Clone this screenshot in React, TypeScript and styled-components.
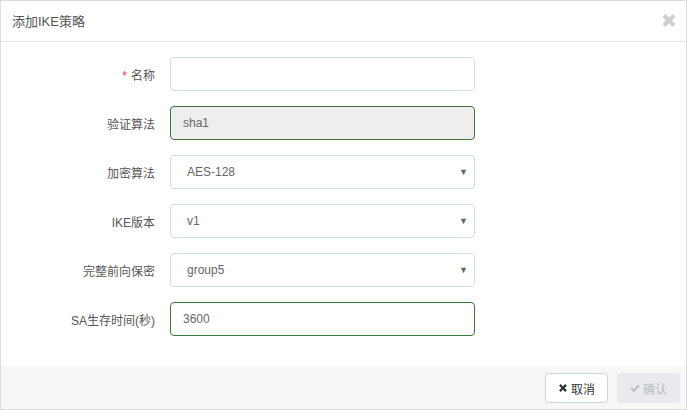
import React from "react";
import styled, { createGlobalStyle } from "styled-components";

const Global = createGlobalStyle`
  html, body { margin: 0; padding: 0; background: #fff; }
  body { font-family: "Liberation Sans", "Noto Sans CJK SC", Arial, sans-serif; }
  * { box-sizing: border-box; }
`;

const Modal = styled.div`
  width: 687px;
  height: 410px;
  border: 1px solid #dcdcdc;
  display: flex;
  flex-direction: column;
  background: #fff;
`;

const Header = styled.div`
  height: 41px;
  border-bottom: 1px solid #e5e5e5;
  display: flex;
  align-items: center;
  justify-content: space-between;
  padding: 0 9px 1px 11px;
`;

const Title = styled.div`
  font-size: 13px;
  color: #555;
`;

const Close = styled.button`
  border: none;
  background: none;
  padding: 0;
  width: 16px;
  height: 16px;
  display: flex;
  align-items: center;
  justify-content: center;
  cursor: pointer;
`;

const Body = styled.div`
  flex: 1;
  padding: 15px 0 30px;
  display: flex;
  flex-direction: column;
  gap: 15px;
`;

const Row = styled.div`
  display: grid;
  grid-template-columns: 154px 305px;
  column-gap: 15px;
  align-items: center;
  height: 34px;
`;

const Label = styled.label`
  text-align: right;
  font-size: 12px;
  color: #555;
`;

const Req = styled.span`
  color: #e4393c;
  margin-right: 4px;
`;

const Field = styled.div<{ $state?: "ok" | "default"; $disabled?: boolean }>`
  position: relative;
  height: 34px;
  border-radius: 4px;
  border: 1px solid ${(p) => (p.$state === "ok" ? "#3c763d" : "#cfdcec")};
  background: ${(p) => (p.$disabled ? "#eee" : "#fff")};
  display: flex;
  align-items: center;
  padding-left: ${(p) => (p.$state === "ok" ? "12px" : "16px")};
  font-size: 12px;
  color: #666;
`;

const Arrow = styled.span`
  position: absolute;
  right: 6px;
  top: 50%;
  transform: translateY(-50%);
  font-size: 9px;
  color: #666;
`;

const Footer = styled.div`
  height: 43px;
  background: #f7f7f7;
  display: flex;
  justify-content: flex-end;
  align-items: flex-start;
  gap: 9px;
  padding: 7px 6px 0 0;
`;

const Btn = styled.button<{ $disabled?: boolean }>`
  height: 30px;
  width: 63px;
  border-radius: 4px;
  border: 1px solid ${(p) => (p.$disabled ? "#e6e8eb" : "#c8d7e8")};
  background: ${(p) => (p.$disabled ? "#e8eaed" : "#fff")};
  color: ${(p) => (p.$disabled ? "#b8bcc2" : "#333")};
  font-family: inherit;
  font-size: 12px;
  display: flex;
  align-items: center;
  justify-content: center;
  gap: 3px;
  padding: 0;
`;

function XIcon({ size, color, w }: { size: number; color: string; w: number }) {
  return (
    <svg width={size} height={size} viewBox="0 0 16 16">
      <path d="M3 3 L13 13 M13 3 L3 13" stroke={color} strokeWidth={w} strokeLinecap="butt" />
    </svg>
  );
}

function Check() {
  return (
    <svg width="10" height="10" viewBox="0 0 16 16">
      <path d="M2 8.5 L6 12.5 L14 4" stroke="#b8bcc2" strokeWidth="3.4" fill="none" />
    </svg>
  );
}

export default function App() {
  return (
    <>
      <Global />
      <Modal>
        <Header>
          <Title>添加IKE策略</Title>
          <Close aria-label="close">
            <XIcon size={17} color="#cfcfcf" w={4} />
          </Close>
        </Header>
        <Body>
          <Row>
            <Label><Req>*</Req>名称</Label>
            <Field />
          </Row>
          <Row>
            <Label>验证算法</Label>
            <Field $state="ok" $disabled>sha1</Field>
          </Row>
          <Row>
            <Label>加密算法</Label>
            <Field>AES-128<Arrow>▼</Arrow></Field>
          </Row>
          <Row>
            <Label>IKE版本</Label>
            <Field>v1<Arrow>▼</Arrow></Field>
          </Row>
          <Row>
            <Label>完整前向保密</Label>
            <Field>group5<Arrow>▼</Arrow></Field>
          </Row>
          <Row>
            <Label>SA生存时间(秒)</Label>
            <Field $state="ok">3600</Field>
          </Row>
        </Body>
        <Footer>
          <Btn>
            <XIcon size={10} color="#333" w={3.4} />取消
          </Btn>
          <Btn $disabled>
            <Check />确认
          </Btn>
        </Footer>
      </Modal>
    </>
  );
}
